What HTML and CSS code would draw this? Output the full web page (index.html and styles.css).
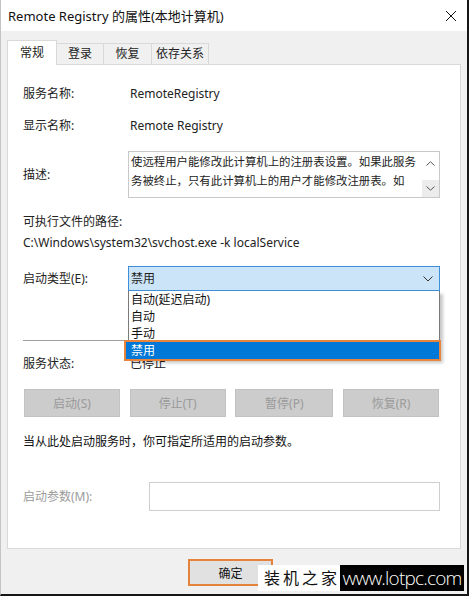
FILE: index.html
```html
<!DOCTYPE html>
<html lang="zh-CN">
<head>
    <meta charset="UTF-8">
    <title>Remote Registry 的属性(本地计算机)</title>
    <link rel="stylesheet" href="styles.css">
</head>
<body>
    <div class="window">
        <div class="titlebar">
            <span class="title">Remote Registry 的属性(本地计算机)</span>
            <svg class="close" width="12" height="12" viewBox="0 0 12 12">
                <path d="M1 1 L11 11 M11 1 L1 11" stroke="#111" stroke-width="1" fill="none"/>
            </svg>
        </div>

        <div class="tabs">
            <div class="tab active">常规</div>
            <div class="tab t-login">登录</div>
            <div class="tab t-recover">恢复</div>
            <div class="tab t-deps">依存关系</div>
        </div>

        <div class="panel">
            <div class="row r-name">
                <span class="label">服务名称:</span>
                <span class="value">RemoteRegistry</span>
            </div>
            <div class="row r-display">
                <span class="label">显示名称:</span>
                <span class="value">Remote Registry</span>
            </div>
            <div class="row r-desc">
                <span class="label">描述:</span>
                <div class="desc-box">
                    <div class="desc-text">
                        <div>使远程用户能修改此计算机上的注册表设置。如果此服务</div>
                        <div>务被终止，只有此计算机上的用户才能修改注册表。如</div>
                    </div>
                    <div class="scroll">
                        <span class="sb-btn">
                            <svg width="9" height="5" viewBox="0 0 9 5"><path d="M0.5 4.5 L4.5 0.8 L8.5 4.5" stroke="#555" fill="none"/></svg>
                        </span>
                        <span class="sb-btn down">
                            <svg width="9" height="5" viewBox="0 0 9 5"><path d="M0.5 0.5 L4.5 4.2 L8.5 0.5" stroke="#555" fill="none"/></svg>
                        </span>
                    </div>
                </div>
            </div>
            <div class="row r-exec">可执行文件的路径:</div>
            <div class="row r-path">C:\Windows\system32\svchost.exe -k localService</div>

            <div class="row r-startup">
                <span class="label">启动类型(E):</span>
                <div class="select-wrap">
                    <div class="select">
                        <span>禁用</span>
                        <svg width="10" height="6" viewBox="0 0 10 6"><path d="M0.5 0.5 L5 5 L9.5 0.5" stroke="#333" fill="none"/></svg>
                    </div>
                    <ul class="dropdown">
                        <li>自动(延迟启动)</li>
                        <li>自动</li>
                        <li>手动</li>
                        <li class="selected">禁用</li>
                    </ul>
                </div>
            </div>

            <div class="separator"></div>

            <div class="row r-status">
                <span class="label">服务状态:</span>
                <span class="value">已停止</span>
            </div>

            <div class="buttons">
                <button class="btn">启动(S)</button>
                <button class="btn">停止(T)</button>
                <button class="btn wide">暂停(P)</button>
                <button class="btn">恢复(R)</button>
            </div>

            <div class="row r-hint">当从此处启动服务时，你可指定所适用的启动参数。</div>

            <div class="row r-param">
                <span class="label param-label">启动参数(M):</span>
                <div class="param-input"></div>
            </div>
        </div>

        <div class="footer">
            <button class="ok">确定</button>
        </div>

        <div class="watermark">
            <span class="wm-cn">装机之家</span>
            <span class="wm-url">www.lotpc.com</span>
        </div>
    </div>
</body>
</html>
```

FILE: styles.css
```css
* {
    box-sizing: border-box;
}

body {
    margin: 0;
    background: #fff;
    font-family: "Noto Sans", "Noto Sans CJK SC", sans-serif;
    font-size: 12px;
    color: #222;
}

.window {
    position: relative;
    width: 469px;
    height: 596px;
    background: #f0f0f0;
    border-left: 1px solid #c4c4c4;
    border-right: 2px solid #161616;
    border-bottom: 2px solid #161616;
    display: flex;
    flex-direction: column;
}

/* title bar */
.titlebar {
    height: 31px;
    background: #fff;
    display: flex;
    align-items: center;
    justify-content: space-between;
    padding: 0 10px 0 7px;
}
.title {
    font-size: 13px;
    color: #111;
}
.close {
    display: block;
}

/* tabs */
.tabs {
    display: flex;
    align-items: flex-end;
    height: 24px;
    margin-top: 9px;
    padding-left: 6px;
}
.tab {
    height: 21px;
    line-height: 20px;
    text-align: center;
    border: 1px solid #d9d9d9;
    border-bottom: none;
    border-left: none;
    background: #f0f0f0;
    color: #222;
}
.tab.active {
    position: relative;
    z-index: 1;
    width: 50px;
    height: 25px;
    margin-bottom: -1px;
    line-height: 24px;
    background: #fff;
    border-left: 1px solid #d9d9d9;
}
.t-login { width: 47px; }
.t-recover { width: 48px; }
.t-deps { width: 57px; }

/* main panel */
.panel {
    width: 454px;
    height: 485px;
    margin-left: 6px;
    background: #fff;
    border: 1px solid #d9d9d9;
    padding: 0 20px 0 15px;
}

.row {
    display: flex;
    align-items: center;
    line-height: 16px;
    white-space: nowrap;
}
.label {
    width: 105px;
    flex-shrink: 0;
}
.value {
    padding-left: 2px;
}

.r-name { margin-top: 21px; }
.r-display { margin-top: 16px; }
.r-desc { margin-top: 17px; height: 47px; }
.r-exec { margin-top: 16px; }
.r-path { margin-top: 5px; }
.r-startup { margin-top: 15px; height: 25px; }
.r-status { margin-top: 15px; }
.r-hint { margin-top: 17px; color: #111; }
.r-param { margin-top: 32px; height: 29px; }

/* description box */
.desc-box {
    width: 312px;
    height: 47px;
    border: 1px solid #c9c9c9;
    display: flex;
    overflow: hidden;
}
.desc-text {
    flex: 1;
    padding-left: 2px;
    font-size: 11.4px;
    line-height: 19px;
    overflow: hidden;
    color: #222;
}
.scroll {
    width: 17px;
    display: flex;
    flex-direction: column;
    justify-content: space-between;
    padding-top: 3px;
}
.sb-btn {
    height: 17px;
    display: flex;
    align-items: center;
    justify-content: center;
}
.sb-btn.down {
    background: #ececec;
}

/* combobox */
.select-wrap {
    position: relative;
    width: 312px;
    height: 25px;
}
.select {
    height: 25px;
    display: flex;
    align-items: center;
    justify-content: space-between;
    padding: 0 6px 0 2px;
    background: #cce4f7;
    border: 1px solid #3d8fd9;
}
.dropdown {
    position: absolute;
    top: 25px;
    left: 0;
    z-index: 2;
    width: 312px;
    margin: 0;
    padding: 0;
    list-style: none;
    background: #fff;
    border: 1px solid #7a7a7a;
    border-top: none;
    box-shadow: 3px 3px 3px rgba(0, 0, 0, 0.22);
}
.dropdown li {
    height: 17px;
    line-height: 17px;
    padding-left: 2px;
    color: #111;
}
.dropdown li.selected {
    background: #0078d7;
    color: #fff;
    outline: 2px solid #e8843c;
    outline-offset: 0;
    margin-left: -3px;
    padding-left: 5px;
}

.separator {
    margin-top: 49px;
    height: 1px;
    background: #a0a0a0;
}

/* service buttons */
.buttons {
    display: flex;
    justify-content: space-between;
    margin: 17px 1px 0 1px;
}
.btn {
    width: 96px;
    height: 28px;
    padding: 0;
    background: #cccccc;
    border: 1px solid #c2c2c2;
    color: #9a9a9a;
    font-family: inherit;
    font-size: 12px;
}
.btn.wide {
    width: 98px;
}

.param-label {
    width: 126px;
    color: #9b9b9b;
}
.param-input {
    width: 291px;
    height: 29px;
    border: 1px solid #cfcfcf;
}

/* bottom bar */
.footer {
    flex: 1;
    padding: 10px 0 0 187px;
}
.ok {
    width: 85px;
    height: 27px;
    padding: 0;
    background: #e1e1e1;
    border: 2px solid #e4843c;
    font-family: inherit;
    font-size: 12px;
    color: #111;
}

/* watermark stamp in the corner */
.watermark {
    position: absolute;
    right: 3px;
    bottom: 3px;
    display: flex;
    height: 26px;
}
.wm-cn {
    width: 82px;
    background: #fff;
    color: #111;
    font-size: 16px;
    line-height: 26px;
    letter-spacing: 3px;
    padding-left: 6px;
}
.wm-url {
    width: 124px;
    background: #000;
    color: #fff;
    font-family: "Open Sans", sans-serif;
    font-weight: 300;
    font-size: 19px;
    line-height: 26px;
    letter-spacing: -0.8px;
    text-align: center;
}
```
